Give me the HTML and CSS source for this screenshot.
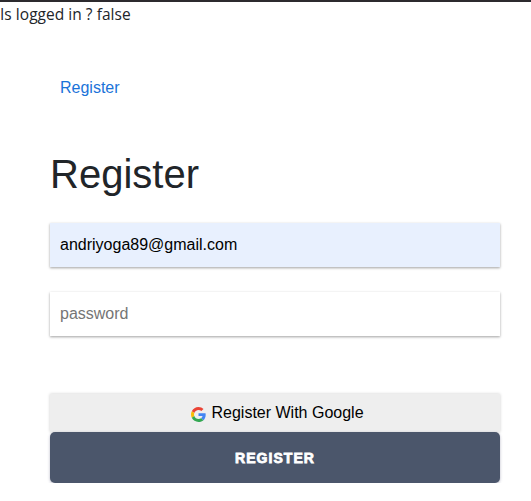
FILE: index.html
```html
<!DOCTYPE html>
<html lang="en">
<head>
<meta charset="utf-8">
<title>Register</title>
<link rel="stylesheet" href="styles.css">
</head>
<body>
<div class="status"><span>Is logged in ? false</span></div>
<main class="container">
  <nav class="nav"><a class="nav-link" href="#">Register</a></nav>
  <h1 class="title">Register</h1>
  <form class="form">
    <input class="field filled" type="email" value="andriyoga89@gmail.com">
    <input class="field" type="password" placeholder="password">
    <button class="google" type="button">
      <svg class="logo" viewBox="0 0 48 48" aria-hidden="true">
        <path fill="#EA4335" d="M24 9.5c3.54 0 6.71 1.22 9.21 3.6l6.85-6.85C35.9 2.38 30.47 0 24 0 14.62 0 6.51 5.38 2.56 13.22l7.98 6.19C12.43 13.72 17.74 9.5 24 9.5z"/>
        <path fill="#4285F4" d="M46.98 24.55c0-1.57-.15-3.09-.38-4.55H24v9.02h12.94c-.58 2.96-2.26 5.48-4.78 7.18l7.73 6c4.51-4.18 7.09-10.36 7.09-17.65z"/>
        <path fill="#FBBC05" d="M10.53 28.59c-.48-1.45-.76-2.99-.76-4.59s.27-3.14.76-4.59l-7.98-6.19C.92 16.46 0 20.12 0 24s.92 7.54 2.56 10.78l7.97-6.19z"/>
        <path fill="#34A853" d="M24 48c6.48 0 11.93-2.13 15.89-5.81l-7.73-6c-2.15 1.45-4.92 2.3-8.16 2.3-6.26 0-11.57-4.22-13.47-9.91l-7.98 6.19C6.51 42.62 14.62 48 24 48z"/>
      </svg>
      <span>Register With Google</span>
    </button>
    <button class="submit" type="submit"><span>Register</span></button>
  </form>
</main>
</body>
</html>
```
FILE: styles.css
```css
* { box-sizing: border-box; }
body {
  margin: 0;
  border-top: 2px solid #2c2a2e;
  background: #fff;
  color: #212529;
  font: 16px/24px "Liberation Sans", Arial, sans-serif;
  overflow: hidden;
}
.status {
  height: 24px;
  font-family: "Segoe UI", "Open Sans", sans-serif;
  font-size: 15.5px;
  letter-spacing: 0.03px;
  white-space: nowrap;
}
.container { width: 450px; margin: 50px 0 0 50px; }
.nav { height: 24px; padding-left: 10px; }
.nav-link { color: #1a73d9; text-decoration: none; }
.title {
  margin: 50px 0 0;
  height: 48px;
  font-size: 40px;
  font-weight: 400;
  line-height: 48px;
}
.form { display: flex; flex-direction: column; margin-top: 25px; }
.field {
  height: 44px;
  margin: 0 0 25px;
  padding: 0 10px;
  border: 0;
  background: #fff;
  color: #000;
  font: inherit;
  box-shadow: 0 1px 3px rgba(0, 0, 0, .2), 0 1px 2px rgba(0, 0, 0, .2);
}
.field::placeholder { color: #757575; }
.filled { background: #e8f0fe; }
.google {
  display: flex;
  align-items: center;
  justify-content: center;
  gap: 5px;
  height: 38px;
  margin: 33px 0 0;
  padding: 0 0 0 5px;
  border: 0;
  background: #eee;
  color: #000;
  font: inherit;
  box-shadow: 0 0 3px rgba(0, 0, 0, .2);
}
.logo { width: 15px; height: 15px; margin-top: 2px; }
.submit {
  height: 51px;
  padding: 0;
  border: 0;
  border-radius: 5px;
  background: #4b566b;
  color: #fff;
  font: 700 14px/20px "Arial Black", "Liberation Sans", sans-serif;
  -webkit-text-stroke: .8px #fff;
  text-transform: uppercase;
  letter-spacing: 1.05px;
  box-shadow: 0 1px 3px rgba(50, 50, 93, .35);
}
```
